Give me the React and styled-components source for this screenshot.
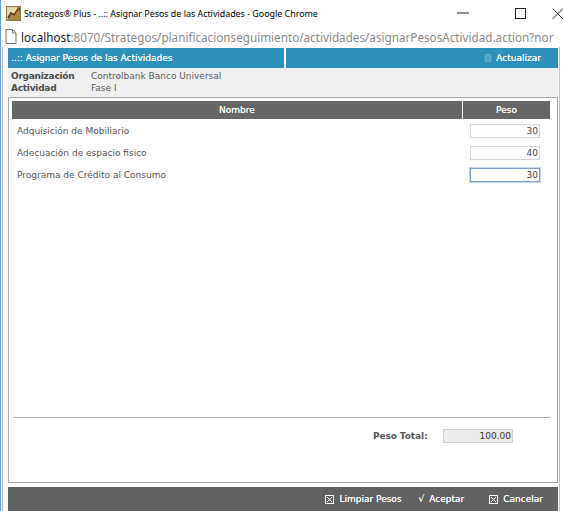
import React from "react";
import styled, { createGlobalStyle } from "styled-components";

const Global = createGlobalStyle`
  html, body { margin: 0; padding: 0; background: #fff; }
  body { width: 563px; height: 511px; overflow: hidden; }
  * { box-sizing: border-box; }
`;

const Window = styled.div`
  width: 563px;
  height: 511px;
  display: flex;
  flex-direction: column;
  background: #fff;
  border-left: 1px solid #6a9fd4;
  overflow: hidden;
`;

const TitleBar = styled.div`
  height: 26px;
  display: flex;
  align-items: center;
  padding-left: 5px;
  font-family: "Noto Sans", sans-serif;
  font-size: 8.9px;
  color: #000;
`;

const TitleText = styled.div`
  flex: 1;
  margin-left: 3px;
  white-space: nowrap;
`;

const Controls = styled.div`
  display: flex;
  align-items: center;
  height: 100%;
`;

const Ctrl = styled.div`
  display: flex;
  align-items: center;
  margin-left: ${(p) => p.gap || 0}px;
  flex-shrink: 0;
`;

const AddressBar = styled.div`
  height: 21px;
  display: flex;
  align-items: center;
  padding-left: 4px;
  font-family: "Noto Sans", sans-serif;
  font-size: 11.7px;
  color: #8a8a8a;
  white-space: nowrap;
  overflow: hidden;
`;

const AddressIcon = styled.span`
  flex-shrink: 0;
  display: flex;
  margin-right: 4px;
`;

const Host = styled.span`
  color: #222;
`;

const Page = styled.div`
  flex: 1;
  display: flex;
  flex-direction: column;
  padding: 1px 1px 0 5px;
  margin: 0 3px 0 1px;
  border-left: 1px solid #b8b8b8;
  border-right: 1px solid #c4c4c4;
  font-family: "DejaVu Sans", Verdana, sans-serif;
  font-size: 9px;
  min-height: 0;
`;

const HeaderBar = styled.div`
  display: grid;
  grid-template-columns: 276px 1fr;
  column-gap: 2px;
  height: 20px;
`;

const HeaderCell = styled.div`
  background: #2c92bb;
  color: #fff;
  display: flex;
  align-items: center;
  justify-content: ${(p) => (p.right ? "flex-end" : "flex-start")};
  padding: 0 ${(p) => (p.right ? "17px" : "3px")};
  gap: 5px;
  text-shadow: 0 0 0.4px #fff;
`;

const RefreshIcon = styled.span`
  display: inline-block;
  width: 6px;
  height: 8px;
  border: 1px solid #6ab0cc;
  background: #4aa0c4;
`;

const InfoBox = styled.div`
  background: #f0f0f0;
  padding: 2px 3px 3px;
  display: grid;
  grid-template-columns: 80px 1fr;
  line-height: 12px;
`;

const InfoLabel = styled.div`
  font-weight: bold;
  color: #4a4a4a;
  letter-spacing: -0.25px;
`;

const InfoValue = styled.div`
  color: #5a5a5a;
`;

const Panel = styled.div`
  flex: 1;
  border: 1px solid #a8a8a8;
  display: flex;
  flex-direction: column;
  padding: 3px 7px 0 3px;
`;

const TableHead = styled.div`
  display: grid;
  grid-template-columns: 1fr 87px;
  column-gap: 1px;
  height: 18px;
  margin-bottom: 1px;
`;

const HeadCell = styled.div`
  background: #666;
  color: #fff;
  display: flex;
  align-items: center;
  justify-content: center;
  text-shadow: 0 0 0.4px #fff;
`;

const Row = styled.div`
  display: grid;
  grid-template-columns: 1fr 88px;
  height: 22px;
  align-items: center;
  color: #555;
`;

const RowName = styled.div`
  padding-left: 5px;
`;

const WeightInput = styled.input`
  width: 70px;
  height: 14px;
  margin-left: 8px;
  border: 1px solid ${(p) => (p.$focused ? "#7a9cc6" : "#d4d4d4")};
  box-shadow: ${(p) => (p.$focused ? "0 0 0 1px #c5d6ea" : "none")};
  background: #fff;
  text-align: right;
  font-family: "DejaVu Sans", Verdana, sans-serif;
  font-size: 9px;
  color: #444;
  padding: 0 1px 0 2px;
  outline: none;
`;

const Spacer = styled.div`
  flex: 1;
`;

const Rule = styled.div`
  height: 1px;
  background: #b0b0b0;
  margin-left: 2px;
`;

const TotalRow = styled.div`
  display: flex;
  align-items: center;
  height: 35px;
  padding-left: 361px;
`;

const TotalLabel = styled.div`
  font-weight: bold;
  color: #555;
  width: 70px;
  letter-spacing: -0.1px;
`;

const TotalInput = styled.input`
  width: 70px;
  height: 14px;
  border: 1px solid #d0d0d0;
  background: #ebebeb;
  text-align: right;
  font-family: "DejaVu Sans", Verdana, sans-serif;
  font-size: 9px;
  color: #333;
  padding: 0 1px;
  outline: none;
`;

const BottomSpace = styled.div`
  height: 29px;
`;

const Footer = styled.div`
  height: 24px;
  margin-top: 4px;
  background: #616161;
  display: flex;
  align-items: center;
  justify-content: flex-end;
  padding-right: 15px;
  color: #fff;
  text-shadow: 0 0 0.4px #fff;
`;

const FooterButton = styled.div`
  display: flex;
  align-items: center;
  gap: 5px;
  margin-left: ${(p) => p.gap || 0}px;
  white-space: nowrap;
`;

const BoxX = () => (
  <svg width="9" height="9" viewBox="0 0 9 9">
    <rect x="0.5" y="0.5" width="8" height="8" fill="none" stroke="#fff" strokeWidth="1" />
    <path d="M2 2 L7 7 M7 2 L2 7" stroke="#fff" strokeWidth="1" />
  </svg>
);

const AppIcon = () => (
  <svg width="15" height="15" viewBox="0 0 15 15" style={{ flexShrink: 0 }}>
    <rect x="0.5" y="0.5" width="14" height="14" fill="#e8d9a8" stroke="#8a7a50" />
    <path d="M1 14 L5 8 L8 10 L13 3 L14 3 L14 14 Z" fill="#a88840" />
    <path d="M2 12 L5 7 L8 9 L12 3" stroke="#5a3a10" strokeWidth="1.6" fill="none" />
    <path d="M11 2 L13.5 2 L13 5" stroke="#5a3a10" strokeWidth="1.2" fill="none" />
  </svg>
);

const PageIcon = () => (
  <svg width="12" height="15" viewBox="0 0 12 15">
    <path d="M1 0.5 H7.5 L11 4 V14.5 H1 Z" fill="#fff" stroke="#777" />
    <path d="M7.5 0.5 V4 H11" fill="none" stroke="#777" />
  </svg>
);

const rows = [
  { name: "Adquisición de Mobiliario", value: "30" },
  { name: "Adecuación de espacio fisico", value: "40" },
  { name: "Programa de Crédito al Consumo", value: "30", focused: true },
];

export default function App() {
  return (
    <>
      <Global />
      <Window>
        <TitleBar>
          <AppIcon />
          <TitleText>Strategos® Plus - ..:: Asignar Pesos de las Actividades - Google Chrome</TitleText>
          <Controls>
            <Ctrl>
              <svg width="12" height="2" viewBox="0 0 12 2"><rect width="12" height="1" y="0.5" fill="#222" /></svg>
            </Ctrl>
            <Ctrl gap={46}>
              <svg width="11" height="11" viewBox="0 0 11 11"><rect x="0.5" y="0.5" width="10" height="10" fill="none" stroke="#222" /></svg>
            </Ctrl>
            <Ctrl gap={26}>
              <svg width="11" height="11" viewBox="0 0 11 11"><path d="M0.5 0.5 L11 11 M11 0.5 L0.5 11" stroke="#222" strokeWidth="1" /></svg>
            </Ctrl>
          </Controls>
        </TitleBar>
        <AddressBar>
          <AddressIcon>
            <PageIcon />
          </AddressIcon>
          <span>
            <Host>localhost</Host>:8070/Strategos/planificacionseguimiento/actividades/asignarPesosActividad.action?nor
          </span>
        </AddressBar>
        <Page>
          <HeaderBar>
            <HeaderCell>..:: Asignar Pesos de las Actividades</HeaderCell>
            <HeaderCell right>
              <RefreshIcon />
              Actualizar
            </HeaderCell>
          </HeaderBar>
          <InfoBox>
            <InfoLabel>Organización</InfoLabel>
            <InfoValue>Controlbank Banco Universal</InfoValue>
            <InfoLabel>Actividad</InfoLabel>
            <InfoValue>Fase I</InfoValue>
          </InfoBox>
          <Panel>
            <TableHead>
              <HeadCell>Nombre</HeadCell>
              <HeadCell>Peso</HeadCell>
            </TableHead>
            {rows.map((r) => (
              <Row key={r.name}>
                <RowName>{r.name}</RowName>
                <WeightInput defaultValue={r.value} $focused={r.focused} readOnly />
              </Row>
            ))}
            <Spacer />
            <Rule />
            <TotalRow>
              <TotalLabel>Peso Total:</TotalLabel>
              <TotalInput defaultValue="100.00" readOnly />
            </TotalRow>
            <BottomSpace />
          </Panel>
          <Footer>
            <FooterButton>
              <BoxX />
              Limpiar Pesos
            </FooterButton>
            <FooterButton gap={17}>
              <span>√</span>
              Aceptar
            </FooterButton>
            <FooterButton gap={25}>
              <BoxX />
              Cancelar
            </FooterButton>
          </Footer>
        </Page>
      </Window>
    </>
  );
}
